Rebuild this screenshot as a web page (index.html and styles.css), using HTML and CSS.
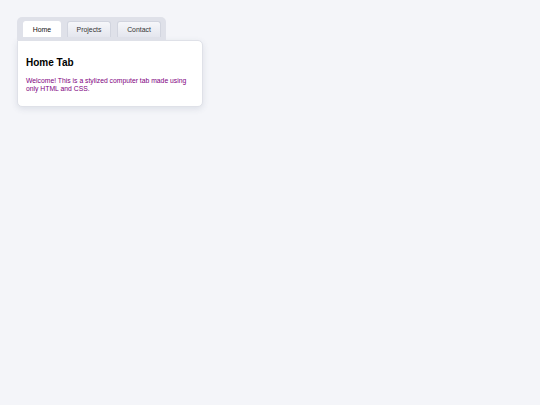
FILE: index.html
```html
<!DOCTYPE html>
<html>
<head>
<meta charset="utf-8">
<link rel="stylesheet" href="styles.css">
</head>
<body>
<div class="tabs">
  <div class="tabbar">
    <div class="tab active">Home</div>
    <div class="tab">Projects</div>
    <div class="tab">Contact</div>
  </div>
  <div class="card">
    <h2 class="title">Home Tab</h2>
    <p class="text">Welcome! This is a stylized computer tab made using only HTML and CSS.</p>
  </div>
</div>
</body>
</html>
```
FILE: styles.css
```css
html, body {
  margin: 0;
  padding: 0;
  background: #f4f5f9;
  font-family: "Liberation Sans", Arial, sans-serif;
}
body {
  padding: 17px;
}
.tabs {
  width: 186px;
}
.tabbar {
  display: inline-flex;
  gap: 6px;
  padding: 4px 5px 3px 6px;
  background: #dfe1e9;
  border-radius: 5px 5px 0 0;
}
.tab {
  width: 38px;
  height: 16px;
  padding-bottom: 1px;
  display: flex;
  align-items: center;
  justify-content: center;
  font-size: 6.9px;
  color: #333;
  background: linear-gradient(#f6f7fa, #e4e6ee);
  border-radius: 3px 3px 0 0;
  box-sizing: border-box;
  border: 1px solid #d2d5df;
  border-bottom: none;
}
.tab:nth-child(2), .tab:nth-child(3) {
  width: 44px;
}
.tab.active {
  background: #fff;
  color: #111;
  border-color: #fff;
}
.card {
  background: #fff;
  border: 1px solid #dfe1e8;
  border-radius: 0 5px 5px 5px;
  box-shadow: 0 2px 6px rgba(60, 70, 110, 0.12);
  padding: 16px 8px 0;
  box-sizing: border-box;
  width: 186px;
  height: 67px;
}
.title {
  margin: 0 0 8px;
  font-size: 10px;
  line-height: 12px;
  font-weight: bold;
  color: #000;
}
.text {
  margin: 0;
  font-size: 6.8px;
  line-height: 8px;
  color: #800080;
}
```
